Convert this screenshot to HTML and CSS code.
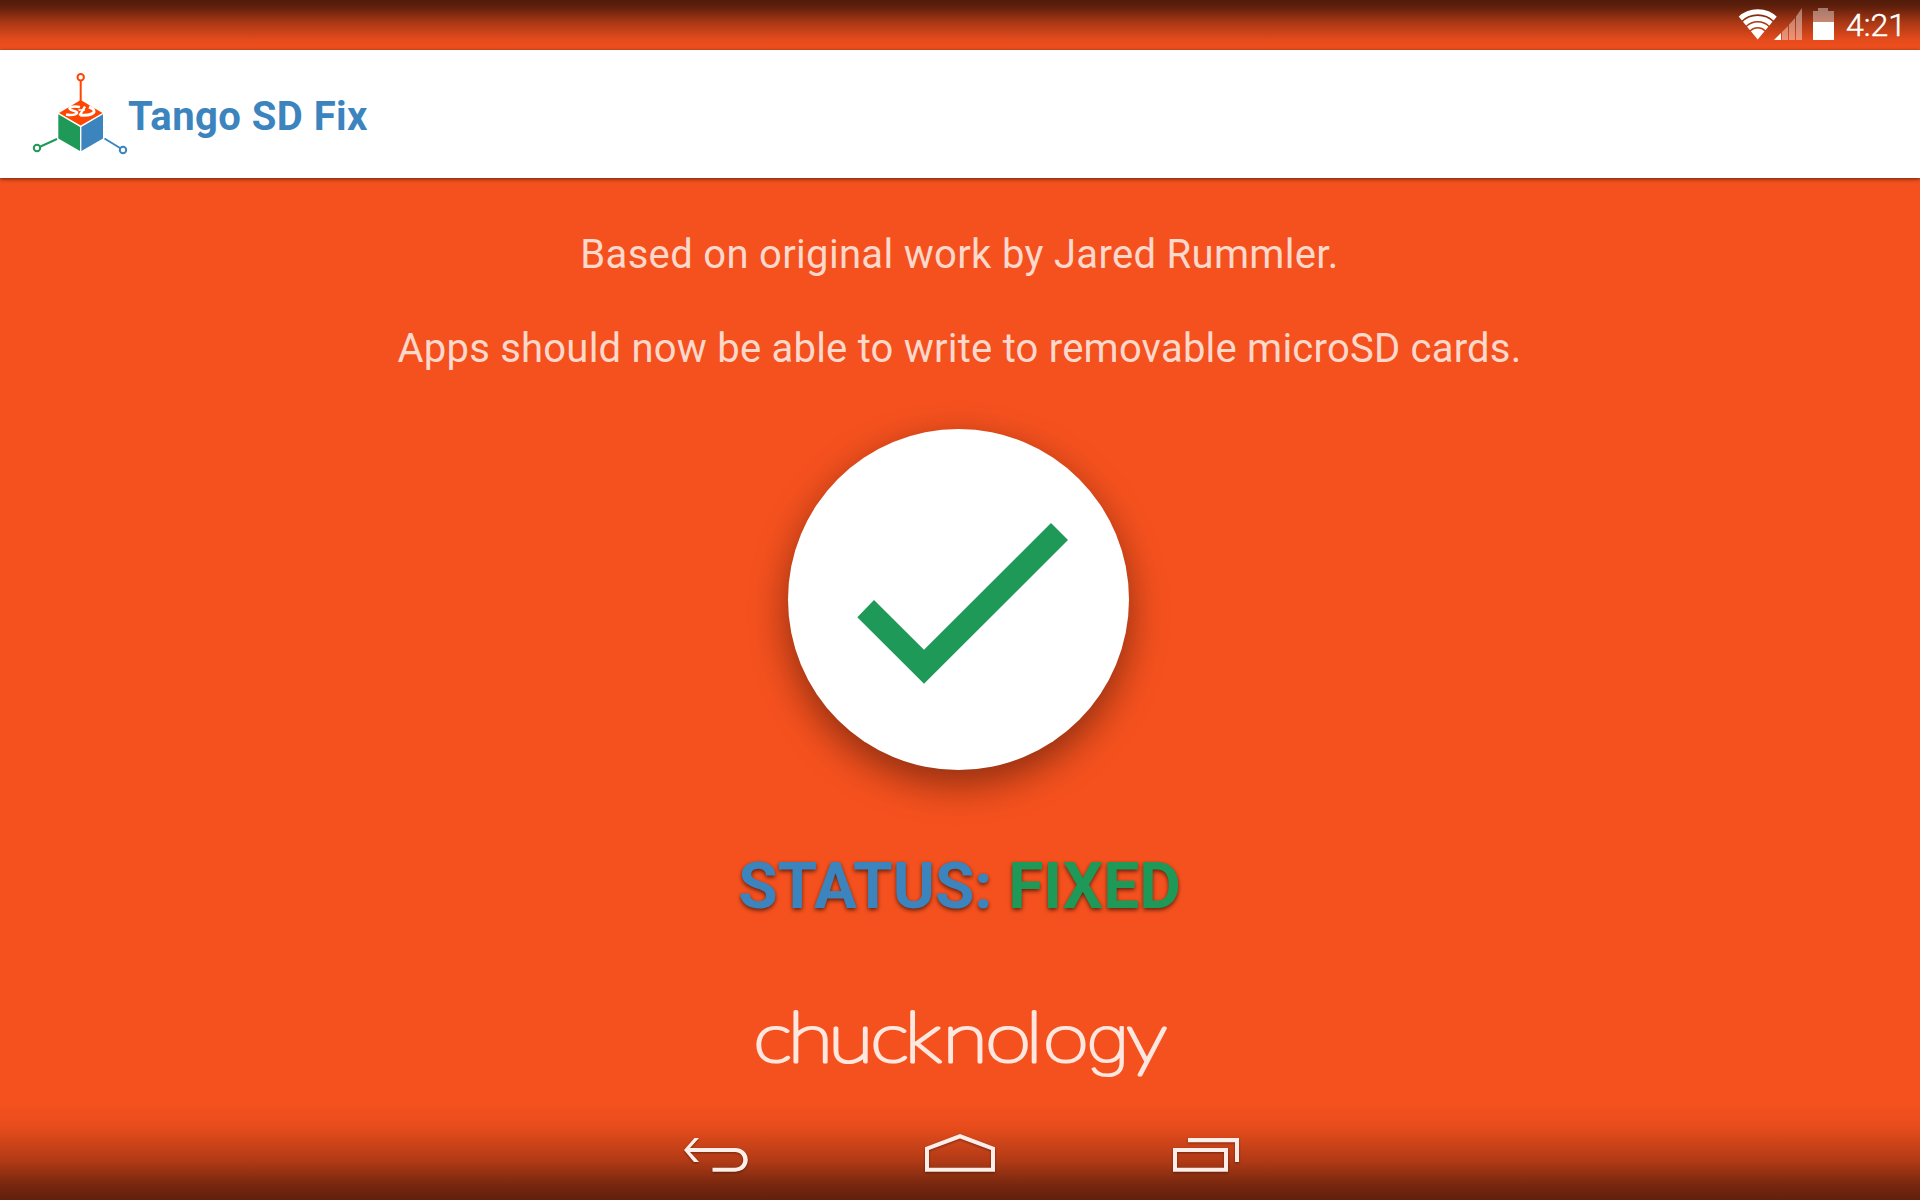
FILE: index.html
```html
<!DOCTYPE html>
<html lang="en">
<head>
<meta charset="utf-8">
<title>Tango SD Fix</title>
<link rel="stylesheet" href="styles.css">
</head>
<body>
<div class="screen">
  <div class="status-bar">
    <svg class="status-icons" width="100" height="50" viewBox="0 0 100 50">
      <defs><clipPath id="fan"><path d="M19.700 39.500L-4 11V6H43.500V11Z"/></clipPath></defs>
      <g clip-path="url(#fan)" fill="none" stroke="#fff" stroke-width="5">
        <circle cx="19.700" cy="38" r="26.200"/>
        <circle cx="19.700" cy="38" r="19.500"/>
        <circle cx="19.700" cy="38" r="13.300" stroke-width="4.400"/>
        <circle cx="19.700" cy="38" r="4.800" stroke-width="9.600"/>
      </g>
      <path fill="#fff" d="M36 40L43 33V40Z"/>
      <path fill="#fff" fill-opacity=".4" d="M44 32L50 26V40H44ZM51 24.800L57 18V40H51ZM58 16.500L64 8V40H58Z"/>
      <path fill="#fff" fill-opacity=".4" d="M75 11H80V8H90V11H96V22H75Z"/>
      <path fill="#fff" d="M75 22H96V40H75Z"/>
    </svg>
    <span class="clock">4:21</span>
  </div>
  <header class="app-bar">
    <svg class="app-logo" width="98" height="90" viewBox="0 0 98 90">
      <g stroke-width="2" fill="none">
        <g stroke="#ff4500"><path d="M50.700 14V34"/><circle cx="50.700" cy="10.300" r="3.200"/></g>
        <g stroke="#1e9958"><path d="M27 72L10.500 79.500"/><circle cx="7" cy="81" r="3.200"/></g>
        <g stroke="#3c84be"><path d="M74.500 71.500L90 81"/><circle cx="93" cy="83" r="3.200"/></g>
      </g>
      <path fill="#ff4500" d="M50.700 33L72.500 46L50.700 58.500L29 46Z"/>
      <path fill="#1e9958" d="M28.300 47.300L50 60V84L28.300 71.500Z"/>
      <path fill="#3c84be" d="M73 47.300L51.400 60V84L73 71.500Z"/>
      <g fill="none" stroke="#fff" stroke-width="2.400">
        <path d="M50 40C43 38.500 36 40.500 41 43L46 44.500C50 46.500 43 49 36 47.500"/>
        <path d="M55 39.500L49.500 48.700"/>
        <path stroke-width="3" d="M50.500 48.200C59 49 68 46 62.500 41.500L59 40"/>
        <path stroke-width="1.600" d="M48.500 43H55"/>
      </g>
    </svg>
    <h1 class="app-title">Tango SD Fix</h1>
  </header>
  <main class="content">
    <p class="credit">Based on original work by Jared Rummler.</p>
    <p class="message">Apps should now be able to write to removable microSD cards.</p>
    <div class="badge">
      <svg width="341" height="341" viewBox="0 0 341 341"><path fill="#1e9958" d="M69.300 188.300L86 171L136 220.700L263 94L280 111L136 254.700Z"/></svg>
    </div>
    <p class="status"><span class="status-label">STATUS:</span> <span class="status-value">FIXED</span></p>
    <svg class="brand" width="420" height="130" viewBox="0 0 420 130">
      <text transform="scale(1.170 1)" y="92.500" x="2.700 32.200 66.900 102.800 132.100 164.500 201.100 235.400 250.400 287.400 321.800">chucknolo<tspan class="brand-g">g</tspan>y</text>
    </svg>
  </main>
  <nav class="nav-bar">
    <svg width="72" height="48" viewBox="680 1130 72 48"><path d="M699 1138H694.500L684 1150L694 1162H699L690 1152H735C746 1152 746 1167.700 735 1167.700H712.500V1171.700H735C752 1171.700 752 1148 735 1148H690Z"/></svg>
    <svg width="72" height="48" viewBox="925 1130 72 48"><path fill-rule="evenodd" d="M925 1147.300L960 1134L995 1147.300V1171.700H925ZM929 1150V1167.700H991V1150L960 1138.500Z"/></svg>
    <svg width="72" height="48" viewBox="1170 1130 72 48"><path fill-rule="evenodd" d="M1188 1138H1239V1162H1235V1142.300H1188ZM1173 1148H1228V1171.700H1173ZM1177 1152V1167.700H1224V1152Z"/></svg>
  </nav>
</div>
</body>
</html>
```
FILE: styles.css
```css
* { box-sizing: border-box; }
body { margin: 0; }
p, h1 { margin: 0; }
.screen {
  width: 1920px;
  height: 1200px;
  display: flex;
  flex-direction: column;
  overflow: hidden;
  background: #f5511e;
  font-family: Roboto, sans-serif;
}
.status-bar {
  height: 50px;
  flex: none;
  display: flex;
  justify-content: flex-end;
  padding-right: 17px;
  background: linear-gradient(#521b0a, #5c1e0b 12%, #a93815 45%, #e54b1c 80%, #f4511e);
}
.status-icons { margin-right: 8px; }
.clock {
  width: 57px;
  color: #fff;
  font-size: 32px;
  font-weight: 300;
  line-height: 51px;
  -webkit-text-stroke: .5px #fff;
  white-space: nowrap;
}
.app-bar {
  height: 128px;
  flex: none;
  display: flex;
  padding: 17px 0 0 30px;
  background: #fff;
  box-shadow: 0 1px 4px rgba(0, 0, 0, .6);
}
.app-title {
  margin-top: 26px;
  color: #3c84be;
  font-size: 40px;
  line-height: 47px;
  font-weight: 700;
  letter-spacing: .45px;
}
.content {
  flex: 1;
  display: flex;
  flex-direction: column;
  align-items: center;
  padding-top: 53px;
}
.credit, .message {
  margin-right: 1px;
  color: #fdd8cb;
  font-size: 40px;
  line-height: 47px;
  white-space: nowrap;
}
.credit { letter-spacing: .32px; }
.message { margin-top: 47px; letter-spacing: .22px; }
.badge {
  width: 341px;
  height: 341px;
  margin: 57px 3px 0 0;
  border-radius: 50%;
  background: #fff;
  box-shadow: 0 14px 38px rgba(0, 0, 0, .43);
}
.status {
  margin: 79px 1px 0 0;
  font-size: 64px;
  line-height: 75px;
  font-weight: 700;
  white-space: nowrap;
  text-shadow: 0 2px 4px rgba(0, 0, 0, .6);
}
.status-label { color: #3c84be; }
.status-value { color: #1e9958; }
.brand { flex: none; margin-top: 46px; }
.brand text {
  font-family: Lato, sans-serif;
  font-size: 71px;
  font-weight: 100;
  fill: #fee7df;
  stroke: #fee7df;
  stroke-width: 3.200px;
  stroke-linejoin: round;
}
.brand .brand-g {
  font-family: Inter, sans-serif;
  font-size: 64px;
  stroke-width: 2.200px;
}
.nav-bar {
  height: 100px;
  flex: none;
  display: flex;
  justify-content: center;
  gap: 173px;
  padding: 30px 0 0 2px;
  background: linear-gradient(rgba(97, 32, 12, 0), rgba(97, 32, 12, .08) 25%, rgba(97, 32, 12, .45) 60%, rgba(97, 32, 12, .85) 85%, #61200c);
}
.nav-bar svg {
  fill: #fdeee9;
  filter: drop-shadow(0 1px 1px rgba(0, 0, 0, .4));
}
```
